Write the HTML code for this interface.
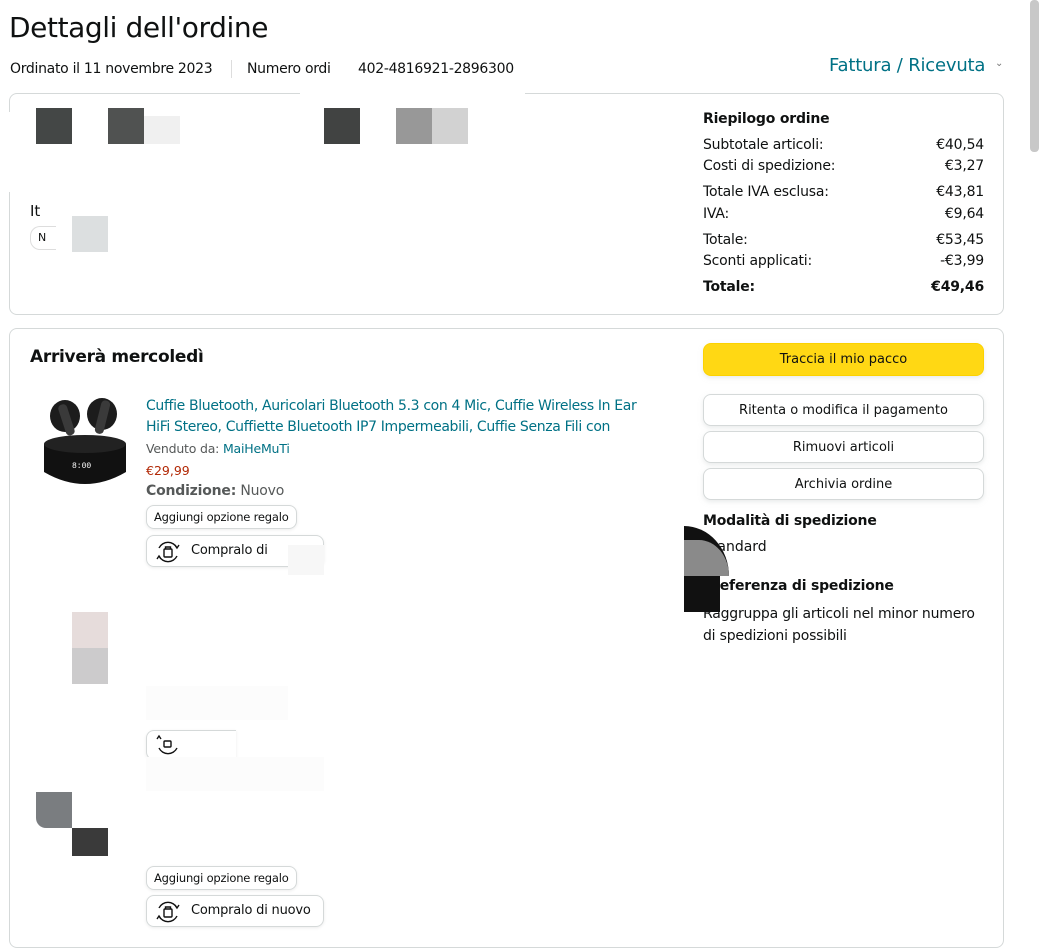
<!DOCTYPE html>
<html><head><meta charset="utf-8"><style>
*{margin:0;padding:0;box-sizing:border-box}
body{width:1047px;height:925px;overflow:hidden;background:#fff;font-family:"DejaVu Sans","Liberation Sans",sans-serif;color:#0f1111;position:relative}
.a{position:absolute;white-space:nowrap}
.box{position:absolute;border:1px solid #d5d9d9;border-radius:8px}
.btn{position:absolute;border:1px solid #d5d9d9;border-radius:8px;background:#fff;font-size:13px;text-align:center;box-shadow:0 2px 5px rgba(213,217,217,.5)}
.row{position:absolute;left:703px;width:281px;font-size:14px;display:flex;justify-content:space-between;letter-spacing:-0.2px}
.pill{position:absolute;border:1px solid #d5d9d9;border-radius:8px;font-size:11.5px;padding:0 7px;height:24px;line-height:22px;box-shadow:0 1px 3px rgba(0,0,0,.08);letter-spacing:-0.2px}
</style></head><body>
<div class="a" style="left:9px;top:11px;font-size:28px;letter-spacing:-0.4px">Dettagli dell'ordine</div>
<div class="a" style="left:10px;top:61px;font-size:14px;letter-spacing:-0.3px">Ordinato il 11 novembre 2023</div>
<div class="a" style="left:231px;top:60px;width:1px;height:18px;background:#ddd"></div>
<div class="a" style="left:247px;top:61px;font-size:14px;letter-spacing:-0.3px">Numero ordi</div>
<div class="a" style="left:358px;top:61px;font-size:14px;letter-spacing:-0.3px">402-4816921-2896300</div>
<div class="a" style="left:829px;top:55px;font-size:18px;color:#007185;letter-spacing:-0.2px">Fattura / Ricevuta</div>
<div class="a" style="left:995px;top:58px;font-size:10px;color:#777">⌄</div>
<div class="a" style="left:1030px;top:0;width:9px;height:152px;background:#c8c8c8;border-radius:4px"></div>

<div class="box" style="left:9px;top:93px;width:995px;height:222px"></div>
<div class="a" style="left:300px;top:85px;width:225px;height:12px;background:#fff"></div>
<div class="a" style="left:0;top:112px;width:28px;height:80px;background:#fff"></div>
<div class="a" style="left:36px;top:108px;width:36px;height:36px;background:#444746"></div>
<div class="a" style="left:108px;top:108px;width:36px;height:36px;background:#505251"></div>
<div class="a" style="left:144px;top:116px;width:36px;height:28px;background:#f0f0f0"></div>
<div class="a" style="left:324px;top:108px;width:36px;height:36px;background:#414342"></div>
<div class="a" style="left:396px;top:108px;width:36px;height:36px;background:#989898"></div>
<div class="a" style="left:432px;top:108px;width:36px;height:36px;background:#d2d2d2"></div>
<div class="a" style="left:30px;top:202px;font-size:15px">It</div>
<div class="a" style="left:30px;top:226px;width:26px;height:24px;border:1px solid #ddd;border-right:none;border-radius:10px 0 0 10px;font-size:11px;padding:4px 0 0 7px">N</div>
<div class="a" style="left:72px;top:216px;width:36px;height:36px;background:#dcdfe0"></div>

<div class="a" style="left:703px;top:111px;font-size:14px;font-weight:bold;letter-spacing:-0.2px">Riepilogo ordine</div>
<div class="row" style="top:137px"><span>Subtotale articoli:</span><span>€40,54</span></div>
<div class="row" style="top:158px"><span>Costi di spedizione:</span><span>€3,27</span></div>
<div class="row" style="top:184px"><span>Totale IVA esclusa:</span><span>€43,81</span></div>
<div class="row" style="top:206px"><span>IVA:</span><span>€9,64</span></div>
<div class="row" style="top:232px"><span>Totale:</span><span>€53,45</span></div>
<div class="row" style="top:253px"><span>Sconti applicati:</span><span>-€3,99</span></div>
<div class="row" style="top:279px;font-weight:bold"><span>Totale:</span><span>€49,46</span></div>

<div class="box" style="left:9px;top:328px;width:995px;height:620px"></div>
<div class="a" style="left:30px;top:347px;font-size:17px;font-weight:bold;letter-spacing:-0.3px">Arriverà mercoledì</div>

<svg class="a" style="left:40px;top:394px" width="90" height="96" viewBox="0 0 90 96">
<path d="M4 50 Q45 36 86 50 L86 78 Q45 102 4 78Z" fill="#111"/>
<ellipse cx="45" cy="50" rx="41" ry="9" fill="#222"/>
<ellipse cx="25" cy="22" rx="15" ry="16" fill="#1c1c1c"/>
<ellipse cx="62" cy="20" rx="15" ry="16" fill="#1c1c1c"/>
<rect x="22" y="10" width="9" height="32" rx="4" fill="#3a3a3a" transform="rotate(-18 26 26)"/>
<rect x="58" y="6" width="9" height="34" rx="4" fill="#3a3a3a" transform="rotate(14 62 23)"/>
<text x="32" y="74" font-size="8" fill="#fff" font-family="Liberation Mono">8:00</text>
</svg>
<div class="a" style="left:146px;top:396px;font-size:14px;color:#007185;line-height:21px;letter-spacing:-0.35px">Cuffie Bluetooth, Auricolari Bluetooth 5.3 con 4 Mic, Cuffie Wireless In Ear<br>HiFi Stereo, Cuffiette Bluetooth IP7 Impermeabili, Cuffie Senza Fili con</div>
<div class="a" style="left:146px;top:441px;font-size:12.5px;color:#565959;letter-spacing:-0.2px">Venduto da: <span style="color:#007185">MaiHeMuTi</span></div>
<div class="a" style="left:146px;top:463px;font-size:12.5px;color:#b12704">€29,99</div>
<div class="a" style="left:146px;top:483px;font-size:14px;color:#565959;letter-spacing:-0.2px"><b>Condizione:</b> Nuovo</div>
<div class="pill" style="left:146px;top:505px">Aggiungi opzione regalo</div>
<div class="pill" style="left:146px;top:535px;width:178px;height:32px;font-size:13px;line-height:30px;padding-left:44px">Compralo di</div>
<svg class="a" style="left:155px;top:539px" width="26" height="26" viewBox="0 0 26 26" fill="none" stroke="#111" stroke-width="1.4"><path d="M4 9 A10 10 0 0 1 22 9M22 17 A10 10 0 0 1 4 17"/><path d="M20 6 L22 9 L24 6M2 20 L4 17 L6 20"/><rect x="9" y="10" width="8" height="8" rx="1"/><path d="M10.5 10 V8 H15.5 V10"/></svg>
<div class="a" style="left:288px;top:545px;width:36px;height:30px;background:#f7f7f7"></div>

<div class="a" style="left:72px;top:612px;width:36px;height:36px;background:#e6dcdb"></div>
<div class="a" style="left:72px;top:648px;width:36px;height:36px;background:#cccbcc"></div>
<div class="a" style="left:146px;top:686px;width:142px;height:34px;background:#fcfcfc"></div>
<div class="pill" style="left:146px;top:730px;width:90px;height:30px;border-right:none;border-radius:8px 0 0 8px"></div>
<svg class="a" style="left:155px;top:731px" width="26" height="26" viewBox="0 0 26 26" fill="none" stroke="#111" stroke-width="1.4"><path d="M22 17 A10 10 0 0 1 4 17"/><path d="M2 8 L4 5 L6 8"/><rect x="9" y="10" width="7" height="6" rx="1"/></svg>
<div class="a" style="left:146px;top:757px;width:178px;height:34px;background:#fcfcfc"></div>
<div class="a" style="left:36px;top:792px;width:36px;height:36px;background:#7a7d80;border-bottom-left-radius:10px"></div>
<div class="a" style="left:72px;top:828px;width:36px;height:28px;background:#3a3a3a"></div>
<div class="pill" style="left:146px;top:866px">Aggiungi opzione regalo</div>
<div class="pill" style="left:146px;top:895px;width:178px;height:32px;font-size:13px;line-height:30px;padding-left:44px">Compralo di nuovo</div>
<svg class="a" style="left:155px;top:899px" width="26" height="26" viewBox="0 0 26 26" fill="none" stroke="#111" stroke-width="1.4"><path d="M4 9 A10 10 0 0 1 22 9M22 17 A10 10 0 0 1 4 17"/><path d="M20 6 L22 9 L24 6M2 20 L4 17 L6 20"/><rect x="9" y="10" width="8" height="8" rx="1"/><path d="M10.5 10 V8 H15.5 V10"/></svg>

<div class="btn" style="left:703px;top:343px;width:281px;height:33px;line-height:31px;background:#ffd814;border-color:#fcd200">Traccia il mio pacco</div>
<div class="btn" style="left:703px;top:394px;width:281px;height:32px;line-height:31px">Ritenta o modifica il pagamento</div>
<div class="btn" style="left:703px;top:431px;width:281px;height:32px;line-height:31px">Rimuovi articoli</div>
<div class="btn" style="left:703px;top:468px;width:281px;height:32px;line-height:31px">Archivia ordine</div>
<div class="a" style="left:703px;top:513px;font-size:14px;font-weight:bold;letter-spacing:-0.2px">Modalità di spedizione</div>
<div class="a" style="left:703px;top:539px;font-size:14px">Standard</div>
<div class="a" style="left:703px;top:578px;font-size:14px;font-weight:bold;letter-spacing:-0.2px">Preferenza di spedizione</div>
<div class="a" style="left:703px;top:603px;font-size:14px;line-height:22px;letter-spacing:-0.2px">Raggruppa gli articoli nel minor numero<br>di spedizioni possibili</div>
<div class="a" style="left:684px;top:526px;width:45px;height:50px;background:#111;border-top-right-radius:45px 50px"></div>
<div class="a" style="left:684px;top:540px;width:45px;height:36px;background:#8a8a8a;border-top-right-radius:30px 36px"></div>
<div class="a" style="left:684px;top:576px;width:36px;height:36px;background:#111"></div>
</body></html>
